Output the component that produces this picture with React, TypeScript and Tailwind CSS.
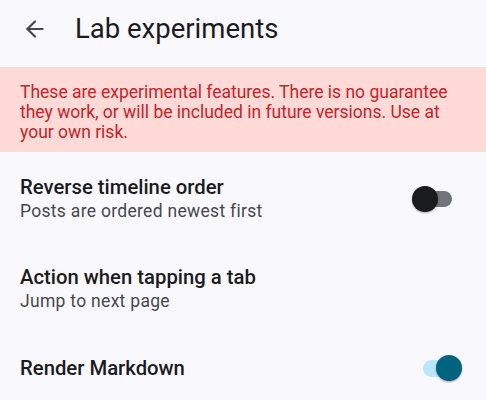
import { ArrowLeft } from 'lucide-react';

type Row = { title: string; subtitle?: string; toggle?: 'on' | 'off' };

const rows: Row[] = [
  { title: 'Reverse timeline order', subtitle: 'Posts are ordered newest first', toggle: 'off' },
  { title: 'Action when tapping a tab', subtitle: 'Jump to next page' },
  { title: 'Render Markdown', toggle: 'on' },
];

const Toggle = ({ on }: { on: boolean }) => {
  if (on) {
    return (
      <div className="relative w-[39px] h-[26px] flex items-center">
        <div className="w-[34px] h-[17px] rounded-full bg-[#b9e6fc]" />
        <div className="absolute right-0 top-0 w-[26px] h-[26px] rounded-full bg-[#00637f] shadow-[0_1px_2px_rgba(0,0,0,0.35)]" />
      </div>
    );
  }
  return (
    <div className="relative w-[40px] h-[26px] flex items-center justify-end mr-[10px]">
      <div className="w-[38px] h-[16px] rounded-full bg-[#6f757b]" />
      <div className="absolute left-0 top-0 w-[26px] h-[26px] rounded-full bg-[#191b1e] shadow-[0_1px_2px_rgba(0,0,0,0.35)]" />
    </div>
  );
};

const App = () => {
  return (
    <div className="w-[486px] h-[400px] overflow-hidden bg-[#f9f9fd] font-['Roboto',sans-serif]">
      <header className="h-[67px] flex items-center pl-[22px] pb-[9px]">
        <ArrowLeft className="h-[26px] w-[26px] text-[#44464f]" strokeWidth={2} />
        <h1 className="ml-[27px] text-[27.5px] leading-none text-[#1b1b1f]">Lab experiments</h1>
      </header>

      <div className="bg-[#ffdad6] pl-[20px] pr-[24px] pt-[15px] pb-[10px] text-[17.5px] leading-[20px] text-[#c4232a]">
        These are experimental features. There is no guarantee they work, or will be included in future versions. Use at your own risk.
      </div>

      {rows.map((row) => (
        <div key={row.title} className="flex items-center pl-[20px] pr-[24px] pt-[23px] pb-[19px]">
          <div className="flex-1">
            <div className="text-[20.3px] leading-[24px] font-medium text-[#1b1b1f]">{row.title}</div>
            {row.subtitle && (
              <div className="text-[17.5px] leading-[24px] text-[#46474e] tracking-[0.3px]">{row.subtitle}</div>
            )}
          </div>
          {row.toggle && <Toggle on={row.toggle === 'on'} />}
        </div>
      ))}
    </div>
  );
};

export default App;
